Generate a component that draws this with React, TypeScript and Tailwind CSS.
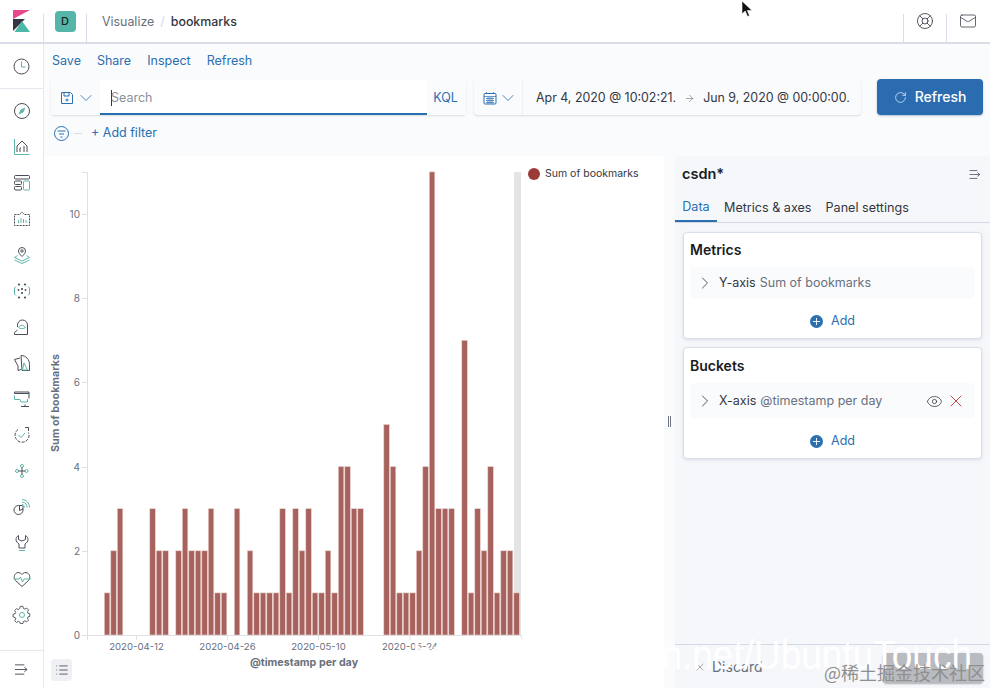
import React from 'react';
import { ArrowRight, ChevronDown, ChevronRight, Eye, LifeBuoy, List, Mail, Plus, RotateCw, X } from 'lucide-react';

const BARS = [
  1, 2, 3, 0, 0, 0, 0, 3, 2, 2, 0, 2, 3, 2, 2, 2,
  3, 1, 1, 0, 3, 0, 2, 1, 1, 1, 1, 3, 1, 3, 2, 3,
  1, 1, 2, 1, 4, 4, 3, 3, 0, 0, 0, 5, 4, 1, 1, 1,
  2, 4, 11, 3, 3, 3, 0, 7, 1, 3, 2, 4, 1, 2, 2, 1,
];

const DARK = '#4a4d57';
const TEAL = '#5fb5a9';

// app icons from the side nav, dark outline with one teal stroke
const NAV_ICONS: React.ReactNode[] = [
  <>
    <circle cx="9" cy="9" r="7.500" stroke={DARK} />
    <path d="M11.800 6.200 10 10l-3.800 1.800L8 8z" stroke={TEAL} fill={TEAL} />
  </>,
  <>
    <path d="M1.500 1v15.500h15" stroke={TEAL} />
    <path d="M4 14V8l5-5 5 5v6M7 14v-4h1M11 14V8" stroke={DARK} />
  </>,
  <>
    <rect x="1.500" y="1.500" width="15" height="3.500" rx="1" stroke={DARK} />
    <rect x="1.500" y="7" width="7" height="3.500" rx="1" stroke={DARK} />
    <rect x="1.500" y="12.500" width="7" height="3.500" rx="1" stroke={DARK} />
    <rect x="10.500" y="7" width="6" height="9" rx="1" stroke={TEAL} />
  </>,
  <>
    <path d="M1.500 4.500h5L9 2l2.500 2.500h5v11h-15z" stroke={DARK} strokeDasharray="2 1" />
    <path d="M5.500 13V10M8 13V8M10.500 13V9M13 13v-3" stroke={TEAL} />
  </>,
  <>
    <path d="M9 10.500C7 8.500 5.500 7 5.500 5a3.500 3.500 0 0 1 7 0c0 2-1.500 3.500-3.500 5.500z" stroke={DARK} />
    <circle cx="9" cy="5" r="1.200" stroke={DARK} />
    <path d="m4.500 9.500-3 2L9 15l7.500-3.500-3-2M1.500 14 9 17.500l7.500-3.500" stroke={TEAL} />
  </>,
  <>
    <path d="M3 4.500 1.500 6v6L3 13.500M15 4.500 16.500 6v6L15 13.500" stroke={TEAL} />
    <g fill={DARK}>
      <circle cx="6" cy="2.500" r="1.100" />
      <circle cx="12" cy="2.500" r="1.100" />
      <circle cx="6" cy="15.500" r="1.100" />
      <circle cx="12" cy="15.500" r="1.100" />
      <circle cx="9" cy="7" r="1.100" />
      <circle cx="5.500" cy="8" r="0.900" />
      <circle cx="12.500" cy="8" r="0.900" />
      <circle cx="9" cy="11" r="1.100" />
    </g>
  </>,
  <>
    <path d="M4.500 9V7a5 5 0 0 1 10 0v9.500H1.500v-2L4.500 12" stroke={DARK} />
    <path d="M5.500 9.500c1.500-3 5-3 7 0-2 1.500-5.500 1.500-7 0z" stroke={TEAL} />
  </>,
  <>
    <path d="M7 4 1.500 5.500 5 12v4.500l3-1" stroke={DARK} />
    <path d="M8 1.500c5 0 8.500 4 8.500 9v6H9z" stroke={DARK} />
    <path d="m9.500 16 1.500-7 3.500 7z" stroke={TEAL} />
  </>,
  <>
    <path d="M1.500 3.500V2h14.500v6.500M1.500 3.500h14.500" stroke={DARK} />
    <path d="M1.500 5.500v4h5.500l1 2.500h6.500V9" stroke={TEAL} />
    <path d="M12 14.500v2.500M8 16.500h8" stroke={DARK} />
  </>,
  <>
    <path d="M5 3.500a7 7 0 1 0 10.500 3" stroke={DARK} strokeDasharray="3 1.200" />
    <path d="m5.500 9 2.500 2.500 4-4.500" stroke={TEAL} />
    <path d="M12 1.500h3.500V5" stroke={DARK} />
  </>,
  <>
    <circle cx="9" cy="4" r="1.500" stroke={TEAL} />
    <circle cx="4" cy="9" r="1.500" stroke={TEAL} />
    <circle cx="13.500" cy="9" r="1.500" stroke={TEAL} />
    <circle cx="9" cy="14" r="1.500" stroke={TEAL} />
    <path d="M9 5.500v7M5.500 9h6.500" stroke={DARK} />
  </>,
  <>
    <path d="M9.500 7.500h-4a4.500 4.500 0 1 0 4.500 4.500V8" stroke={DARK} />
    <path d="M6.500 8v4.500L10 11" stroke={DARK} />
    <path d="M9 1.500c4 0 7.500 3.500 7.500 8M9 4c3 0 5 2.500 5 5.500M9 6.500c1.500 0 2.500 1.500 2.500 3" stroke={TEAL} />
  </>,
  <>
    <path d="M5.500 1.500C3.800 2.500 3 4 3 5.500c0 2 1.500 3.500 3 4.500v4h6v-4c1.500-1 3-2.500 3-4.500 0-1.500-.8-3-2.500-4v4L9 7 5.500 5.500z" stroke={DARK} />
    <path d="M6 16.500h6" stroke={TEAL} />
  </>,
  <>
    <path d="M9 16.500 2.500 10.500C.5 8 1 4.500 3.500 3c2-1 4-.5 5.500 1.500C10.500 2.500 12.500 2 14.500 3c2.500 1.500 3 5 1 7.500z" stroke={DARK} />
    <path d="M.5 9h5.500l1.500-2 2 5 1.500-3h7" stroke={TEAL} />
  </>,
  <>
    <path d="M7.500 1.500h3l.5 2.300 1.700.8 2-1.200 2 2.200-1.200 2 .6 1.600 2 .5v3l-2 .5-.6 1.600 1.200 2-2 2-2-1.200-1.700.7-.5 2.300h-3L7 18.900l-1.700-.7-2 1.200-2-2 1.200-2-.7-1.600-2.300-.5v-3l2.300-.5.7-1.600-1.200-2 2-2.200 2 1.200L7 3.800z" transform="translate(.5 -1) scale(.9)" stroke={DARK} />
    <circle cx="9" cy="9" r="2.500" stroke={TEAL} />
  </>,
];

const CollapseIcon = ({ className }: { className?: string }) => (
  <svg viewBox="0 0 16 14" fill="none" stroke={DARK} strokeWidth="1" className={className}>
    <path d="M1 2h10M1 7h13M1 12h10M11 4.500 14 7l-3 2.500" />
  </svg>
);

const BarChart = () => {
  // drawn in panel coordinates, panel origin is at (44, 156)
  const baseY = 479;
  const unit = 42.1;
  const left = 43;
  const right = 477;
  return (
    <svg width="620" height="532" className="block">
      <rect x="470" y="16" width="7" height={baseY - 16} fill="#e4e4e4" />
      <path d={`M${left}.5 16V${baseY + 5}M${left - 5} ${baseY}.5H${right}M${left - 5} 16.500H${left}M${right}.5 ${baseY}v5`} stroke="#dfe1e5" fill="none" />
      {[0, 2, 4, 6, 8, 10].map(v => (
        <g key={v}>
          <path d={`M${left - 5} ${Math.round(baseY - v * unit)}.5H${left}`} stroke="#dfe1e5" />
          <text x={left - 7} y={baseY - v * unit + 4} textAnchor="end" fontSize="10" fill="#69707d">{v}</text>
        </g>
      ))}
      {BARS.map((v, i) => v > 0 && (
        <rect
          key={i}
          x={60 + i * 6.5 + 0.3}
          y={baseY - v * unit}
          width="5.500"
          height={v * unit}
          fill="#a8625d"
          stroke="#e6cfcd"
          strokeWidth="0.6"
        />
      ))}
      {[['2020-04-12', 92.5], ['2020-04-26', 183.5], ['2020-05-10', 274.5], ['2020-05-24', 366]].map(([label, x]) => (
        <g key={label}>
          <path d={`M${x} ${baseY}v5`} stroke="#dfe1e5" />
          <text x={x} y={494} textAnchor="middle" fontSize="9.600" fill="#69707d">{label}</text>
        </g>
      ))}
      <text x="260" y="510" textAnchor="middle" fontSize="10.700" fontWeight="700" fill="#69707d">@timestamp per day</text>
      <text transform="translate(15 247) rotate(-90)" textAnchor="middle" fontSize="10.700" fontWeight="700" fill="#69707d">Sum of bookmarks</text>
    </svg>
  );
};

const AggRow = ({ axis, desc, actions }: { axis: string; desc: string; actions?: boolean }) => (
  <div className={`flex items-center rounded bg-[#fafbfd] pl-[5px] text-[12.500px] ${actions ? 'h-[35px] pt-[1px]' : 'h-[32px]'}`}>
    <ChevronRight className="h-5 w-5 text-[#343741]" strokeWidth={1} />
    <span className="ml-[4px] text-[#343741]">{axis}</span>
    <span className="ml-1 text-[#69707d]">{desc}</span>
    {actions && (
      <div className="ml-auto mr-[9px] flex items-center gap-[3px]">
        <Eye className="h-[17px] w-[17px] text-[#343741]" strokeWidth={1.1} />
        <X className="h-5 w-5 text-[#bd271e]" strokeWidth={1} />
      </div>
    )}
  </div>
);

const AddButton = () => (
  <div className="flex items-center justify-center gap-[8px] text-[12.500px] text-[#2a6fb0]">
    <span className="flex h-[13px] w-[13px] items-center justify-center rounded-full bg-[#2a6fb0]">
      <Plus className="h-[11px] w-[11px] text-white" strokeWidth={2} />
    </span>
    Add
  </div>
);

export default function App() {
  return (
    <div className="relative flex h-[688px] w-[990px] flex-col overflow-hidden bg-[#fafbfd] font-['Inter',sans-serif]">
      <header className="flex h-[44px] shrink-0 items-stretch border-b-2 border-[#d9dde7] bg-white">
        <div className="flex w-[43px] items-center justify-center">
          <svg width="17" height="22" viewBox="0 0 17 22">
            <path d="M0 0h17L0 9z" fill="#e8488b" />
            <path d="M0 9v12l12-12z" fill="#343741" />
            <path d="M1.500 22H17L9 11z" fill="#4db8a8" />
          </svg>
        </div>
        <div className="mt-[14px] w-px bg-[#d9dde7]" />
        <div className="flex w-[42px] items-center justify-center">
          <span className="flex h-[21px] w-[21px] items-center justify-center rounded bg-[#54b5a8] text-[11px] font-medium text-[#1a1c21]">D</span>
        </div>
        <div className="mt-[14px] w-px bg-[#d9dde7]" />
        <nav className="ml-[15px] flex items-center pt-[2px] text-[12.400px]">
          <span className="text-[#69707d]">Visualize</span>
          <span className="mx-[6px] text-[#d3dae6]">/</span>
          <span className="font-medium text-[#343741]">bookmarks</span>
        </nav>
        <div className="ml-auto mt-[14px] w-px bg-[#d9dde7]" />
        <div className="flex w-[42px] items-center justify-center">
          <LifeBuoy className="h-[18px] w-[18px] text-[#343741]" strokeWidth={1.1} />
        </div>
        <div className="mt-[14px] w-px bg-[#d9dde7]" />
        <div className="flex w-[42px] items-center justify-center pr-[1px]">
          <Mail className="h-[18px] w-[18px] text-[#343741]" strokeWidth={1} />
        </div>
        <div className="w-px" />
      </header>

      <div className="flex min-h-0 flex-1">
        <aside className="flex w-[44px] shrink-0 flex-col border-r border-[#e4e8ef] bg-white">
          <div className="flex h-[45px] items-center justify-center border-b border-[#e4e8ef]">
            <svg width="17" height="17" viewBox="0 0 17 17" fill="none">
              <circle cx="8.500" cy="8.500" r="7.500" stroke={DARK} />
              <path d="M8.500 3.500v5.500h4" stroke={TEAL} />
            </svg>
          </div>
          <div className="flex flex-1 flex-col items-center gap-[18px] pt-[13px]">
            {NAV_ICONS.map((icon, i) => (
              <svg key={i} width="18" height="18" viewBox="0 0 18 18" fill="none" strokeWidth="1" className="overflow-visible">{icon}</svg>
            ))}
          </div>
          <div className="flex h-[38px] items-center justify-center border-t border-[#e4e8ef]">
            <CollapseIcon className="h-[13px] w-[15px]" />
          </div>
        </aside>

        <main className="flex min-w-0 flex-1 flex-col">
          <div className="flex h-[112px] shrink-0 flex-col">
            <div className="flex h-[36px] items-center gap-[16px] pb-[1px] pl-[8px] text-[12.500px] text-[#2a6fb0]">
              <span>Save</span>
              <span>Share</span>
              <span>Inspect</span>
              <span>Refresh</span>
            </div>
            <div className="flex h-[35px] items-stretch pl-[7px] pr-[7px]">
              <div className="flex w-[415px] rounded-sm bg-white shadow-[0_1px_2px_rgba(152,162,179,0.35)]">
                <div className="flex w-[49px] items-center gap-[2px] bg-[#fafbfd] pl-[9px] text-[#2a6fb0]">
                  <svg width="14" height="14" viewBox="0 0 14 14" fill="none" stroke="currentColor" strokeWidth="1">
                    <path d="M1.500 1.500h9l2 2v9h-11zM4 1.500V5h5V1.500" />
                    <circle cx="7" cy="9" r="1" />
                  </svg>
                  <ChevronDown className="h-5 w-5" strokeWidth={1} />
                </div>
                <div className="flex flex-1 items-center border-b-2 border-[#2a6fb0] pl-[11px] pt-[3px] text-[12.500px] text-[#8a919c]">
                  <span className="mr-[-1px] h-[16px] w-px bg-[#343741]" />
                  Search
                </div>
                <div className="flex w-[39px] items-center justify-center bg-[#fafbfd] pt-[2px] pr-[2px] text-[12.500px] text-[#2a6fb0]">KQL</div>
              </div>
              <div className="ml-[8px] flex w-[387px] rounded-sm bg-[#fafbfd] shadow-[0_1px_2px_rgba(152,162,179,0.35)]">
                <div className="flex w-[49px] items-center gap-[1px] border-r border-[#eef0f4] pl-[9px] text-[#2a6fb0]">
                  <svg width="14" height="14" viewBox="0 0 14 14" fill="none" stroke="currentColor" strokeWidth="1">
                    <rect x="1" y="2.500" width="12" height="10.500" rx="1" />
                    <path d="M1 5.500h12M3.500 1v2M10.500 1v2M3 7.500h8M3 9.500h8M3 11.500h8M5 6v6.500M7 6v6.500M9 6v6.500" strokeWidth="0.7" />
                  </svg>
                  <ChevronDown className="h-5 w-5" strokeWidth={1} />
                </div>
                <div className="flex flex-1 items-center whitespace-nowrap pl-[13px] pt-[2px] text-[12.400px] text-[#343741]">
                  <span>Apr 4, 2020 @ 10:02:21.</span>
                  <ArrowRight className="mx-[8px] h-[11px] w-[11px] text-[#69707d]" strokeWidth={1.3} />
                  <span>Jun 9, 2020 @ 00:00:00.</span>
                </div>
              </div>
              <button className="ml-[16px] -mt-[1px] flex w-[106px] items-center justify-center gap-[8px] rounded bg-[#2b6cb0] text-sm font-medium text-white shadow-[0_1px_2px_rgba(0,60,120,0.3)]">
                <RotateCw className="h-[13px] w-[13px]" strokeWidth={1.2} />
                Refresh
              </button>
            </div>
            <div className="flex flex-1 items-center pb-[5px] pl-[10px] text-[12.500px] text-[#2a6fb0]">
              <svg width="15" height="15" viewBox="0 0 15 15" fill="none" stroke="currentColor" strokeWidth="1">
                <circle cx="7.500" cy="7.500" r="7" />
                <path d="M3.500 5h8M5 8h5M6.500 11h2" />
              </svg>
              <span className="ml-[5px] h-px w-[8px] bg-[#d9dde7]" />
              <span className="ml-[9px]">+ Add filter</span>
            </div>
          </div>

          <div className="flex min-h-0 flex-1">
            <section className="relative w-[620px] shrink-0 bg-white">
              <BarChart />
              <div className="absolute left-[484px] top-[11px] flex items-center gap-[5px] text-[10.500px] leading-[12px] text-[#343741]">
                <span className="h-[12px] w-[12px] rounded-full bg-[#9c3b35]" />
                <span className="mt-[1px]">Sum of bookmarks</span>
              </div>
              <div className="absolute bottom-[7px] left-[7px] flex h-[22px] w-[21px] items-center justify-center rounded bg-[#eef0f3]">
                <List className="h-[14px] w-[14px] text-[#343741]" strokeWidth={1.3} />
              </div>
            </section>

            <div className="flex w-[11px] shrink-0 items-center justify-center pb-[2px]">
              <span className="h-[11px] w-[3px] border-x border-[#6f7682]" />
            </div>

            <aside className="flex min-w-0 flex-1 flex-col bg-[#f5f7fa]">
              <div className="flex h-[35px] shrink-0 items-center justify-between pl-[7px] pr-[8px] pt-[2px]">
                <span className="text-[14.500px] font-semibold leading-none text-[#1a1c21]">csdn*</span>
                <CollapseIcon className="h-[11px] w-[14px]" />
              </div>
              <div className="flex h-[32px] shrink-0 items-center border-b border-[#d3dae6] text-[12.600px] text-[#343741]">
                <span className="flex h-full w-[42px] items-center justify-center border-b-2 border-[#2a6fb0] pt-[4px] text-[#2a6fb0]">Data</span>
                <span className="ml-[7px] mt-[4px]">Metrics &amp; axes</span>
                <span className="ml-[14px] mt-[4px]">Panel settings</span>
              </div>
              <div className="flex flex-1 flex-col gap-[8px] px-[8px] pt-[9px]">
                <div className="h-[107px] rounded border border-[#d9dfe9] bg-white px-[6px] shadow-[0_1px_3px_rgba(152,162,179,0.3)]">
                  <div className="flex h-[34px] items-center text-sm font-semibold text-[#1a1c21]">Metrics</div>
                  <AggRow axis="Y-axis" desc="Sum of bookmarks" />
                  <div className="mt-[13px]"><AddButton /></div>
                </div>
                <div className="h-[112px] rounded border border-[#d9dfe9] bg-white px-[6px] shadow-[0_1px_3px_rgba(152,162,179,0.3)]">
                  <div className="flex h-[35px] items-center text-sm font-semibold text-[#1a1c21]">Buckets</div>
                  <AggRow axis="X-axis" desc="@timestamp per day" actions />
                  <div className="mt-[14px]"><AddButton /></div>
                </div>
              </div>
              <div className="flex h-[44px] shrink-0 items-center border-t border-[#d3dae6] pl-[19px] pr-[7px] text-sm text-[#69707d]">
                <X className="h-[12px] w-[12px]" strokeWidth={1.2} />
                <span className="ml-[6px]">Discard</span>
                <span className="ml-auto mt-[3px] h-[30px] w-[100px] rounded bg-[#b8bbc0] shadow-[0_1px_2px_rgba(0,0,0,0.3)]" />
              </div>
            </aside>
          </div>
        </main>
      </div>

      {/* blog watermark over the lower edge */}
      <span className="pointer-events-none absolute bottom-[12px] right-[18px] origin-bottom scale-y-[1.12] whitespace-nowrap font-['Liberation_Sans',sans-serif] text-[37px] font-normal leading-none text-white">https://blog.csdn.net/UbuntuTouch</span>
      <span className="pointer-events-none absolute bottom-[7px] right-[5px] whitespace-nowrap font-['Noto_Sans_CJK_SC',sans-serif] text-[18px] leading-[18px] text-[#8f8f8f]">@稀土掘金技术社区</span>

      {/* mouse pointer */}
      <svg width="12" height="18" viewBox="0 0 12 18" className="absolute left-[741px] top-0">
        <path d="M1 1v13l3.200-3 2.300 5.500 2-.9L6.300 10.500H11z" fill="#111" stroke="#fff" strokeWidth="0.6" />
      </svg>
    </div>
  );
}
